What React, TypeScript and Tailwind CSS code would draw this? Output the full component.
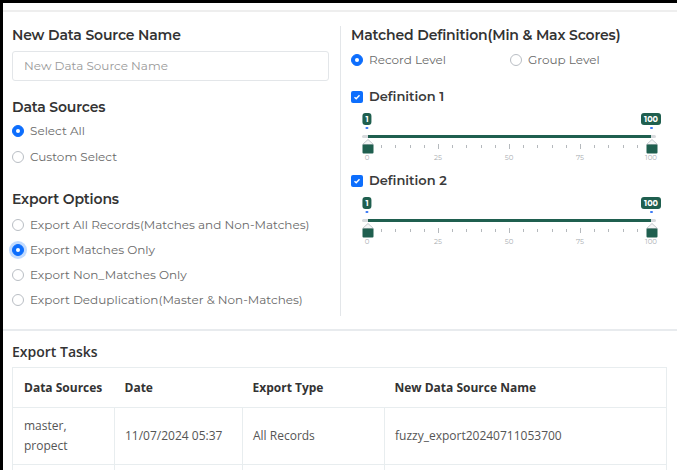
import React from "react";

const heading = "font-['Montserrat','Inter',sans-serif]";

function Radio({ label, checked, focus }: { label: string; checked?: boolean; focus?: boolean }) {
  return (
    <div className="flex items-center gap-[6px]">
      <span
        className={
          "flex h-[12px] w-[12px] shrink-0 items-center justify-center rounded-full border " +
          (checked ? "border-[#0d6efd] bg-[#0d6efd] " : "border-[#b9bec4] bg-white ") +
          (focus ? "shadow-[0_0_0_3px_rgba(13,110,253,0.25)]" : "")
        }
      >
        {checked && <span className="h-[4px] w-[4px] rounded-full bg-white" />}
      </span>
      <span className="text-[12px] text-[#6a6a6a]">{label}</span>
    </div>
  );
}

function CheckRow({ label }: { label: string }) {
  return (
    <div className="flex h-[20px] items-center gap-[6px]">
      <span className="flex h-[12px] w-[12px] items-center justify-center rounded-[2px] bg-[#0d6efd]">
        <svg width="8" height="8" viewBox="0 0 8 8">
          <path d="M1.5 4.2 L3.2 5.8 L6.5 2.2" stroke="white" strokeWidth="1.4" fill="none" />
        </svg>
      </span>
      <span className="text-[13px] font-semibold text-[#3a3a3a]">{label}</span>
    </div>
  );
}

function Thumb({ left }: { left: string }) {
  return (
    <svg className="absolute top-[32px] -ml-[5.5px]" style={{ left }} width="12" height="15" viewBox="0 0 12 15">
      <path d="M0.5 5.5 L6 0.5 L11.5 5.5 Z" fill="#f4f5f6" stroke="#b7bcc1" strokeWidth="0.8" />
      <rect x="0.5" y="5.5" width="11" height="9" rx="1" fill="#1f5f4f" />
    </svg>
  );
}

function Bubble({ text, left }: { text: string; left: string }) {
  return (
    <div className="absolute top-[6px] flex -translate-x-1/2 flex-col items-center" style={{ left }}>
      <span className="flex h-[12px] items-center rounded-[3px] bg-[#1f5f4f] px-[3px] text-[8px] font-bold leading-none text-white">
        {text}
      </span>
      <span className="mt-[2px] h-[2px] w-[3px] rounded-full bg-[#3d7bf6]" />
    </div>
  );
}

function RangeSlider() {
  const ticks = Array.from({ length: 21 }, (_, i) => i * 5);
  return (
    <div className="relative ml-[16px] h-[56px] w-[284px]">
      <Bubble text="1" left="0%" />
      <Bubble text="100" left="100%" />
      <div className="absolute -left-[5px] -right-[5px] top-[28px] h-[3px] rounded-full bg-[#d7dadd]" />
      <div className="absolute left-[1px] right-0 top-[28px] h-[3px] bg-[#1f5f4f]" />
      {ticks.map(t => (
        <span
          key={t}
          className={
            "absolute w-px bg-[#b5b9bd] " + (t % 25 === 0 ? "top-[37px] h-[5px]" : "top-[38px] h-[3px]")
          }
          style={{ left: `${t}%` }}
        />
      ))}
      {[0, 25, 50, 75, 100].map(t => (
        <span
          key={t}
          className="absolute top-[47px] -translate-x-1/2 text-[7px] leading-[8px] text-[#a9adb1]"
          style={{ left: `${t}%` }}
        >
          {t}
        </span>
      ))}
      <Thumb left="0%" />
      <Thumb left="100%" />
    </div>
  );
}

export default function App() {
  return (
    <div className={"h-[470px] w-[677px] overflow-hidden border-l-[3px] border-t-[3px] border-black bg-white " + heading}>
      <div className="mt-[7px] h-[2px] bg-[#eeeeee]" />
      <div className="flex h-[317px]">
        {/* left column */}
        <div className="w-[337px] pl-[9px] pt-[13px]">
          <h2 className="text-[14px] font-semibold leading-[20px] tracking-[-0.15px] text-[#333]">New Data Source Name</h2>
          <div className="mt-[6px] flex h-[30px] w-[317px] items-center rounded-[3px] border border-[#e3e6e9] pl-[11px] text-[12px] text-[#9a9a9a]">
            New Data Source Name
          </div>
          <h2 className="mt-[16px] text-[14px] font-semibold leading-[20px] tracking-[-0.15px] text-[#333]">Data Sources</h2>
          <div className="mt-[1px] flex flex-col">
            <div className="flex h-[26px] items-center"><Radio label="Select All" checked /></div>
            <div className="flex h-[26px] items-center"><Radio label="Custom Select" /></div>
          </div>
          <h2 className="mt-[19px] text-[14px] font-semibold leading-[20px] tracking-[-0.15px] text-[#333]">Export Options</h2>
          <div className="mt-[3px] flex flex-col">
            <div className="flex h-[25px] items-center"><Radio label="Export All Records(Matches and Non-Matches)" /></div>
            <div className="flex h-[25px] items-center"><Radio label="Export Matches Only" checked focus /></div>
            <div className="flex h-[25px] items-center"><Radio label="Export Non_Matches Only" /></div>
            <div className="flex h-[25px] items-center"><Radio label="Export Deduplication(Master & Non-Matches)" /></div>
          </div>
        </div>
        {/* divider */}
        <div className="mt-[14px] h-[290px] w-px bg-[#e3e6e9]" />
        {/* right column */}
        <div className="flex-1 pl-[10px] pt-[13px]">
          <h2 className="text-[14px] font-semibold leading-[20px] tracking-[-0.15px] text-[#333]">Matched Definition(Min &amp; Max Scores)</h2>
          <div className="flex h-[30px] items-center">
            <div className="w-[159px]"><Radio label="Record Level" checked /></div>
            <Radio label="Group Level" />
          </div>
          <div className="mt-[12px]"><CheckRow label="Definition 1" /></div>
          <RangeSlider />
          <div className="mt-[8px]"><CheckRow label="Definition 2" /></div>
          <RangeSlider />
        </div>
      </div>
      <div className="h-[2px] bg-[#e8ebee]" />
      <div className="pl-[9px] pt-[11px] font-['Open_Sans',sans-serif]">
        <h2 className="text-[14px] font-semibold leading-[20px] text-[#333]">Export Tasks</h2>
        <table className="mt-[5px] w-[655px] border-collapse text-left text-[12px]">
          <thead>
            <tr className="h-[40px] border border-[#e8edef] text-[#333]">
              <th className="w-[102px] pl-[11px] font-bold">Data Sources</th>
              <th className="w-[128px] pl-[10px] font-bold">Date</th>
              <th className="w-[142px] pl-[10px] font-bold">Export Type</th>
              <th className="pl-[10px] font-bold">New Data Source Name</th>
            </tr>
          </thead>
          <tbody className="text-[#555]">
            <tr className="h-[57px]">
              <td className="border border-[#e8edef] pl-[11px] leading-[20px]">master,<br />propect</td>
              <td className="border border-[#e8edef] pl-[10px]">11/07/2024 05:37</td>
              <td className="border border-[#e8edef] pl-[10px]">All Records</td>
              <td className="border border-[#e8edef] pl-[10px]">fuzzy_export20240711053700</td>
            </tr>
            <tr className="h-[40px]">
              <td className="border border-[#e8edef]" />
              <td className="border border-[#e8edef]" />
              <td className="border border-[#e8edef]" />
              <td className="border border-[#e8edef]" />
            </tr>
          </tbody>
        </table>
      </div>
    </div>
  );
}
